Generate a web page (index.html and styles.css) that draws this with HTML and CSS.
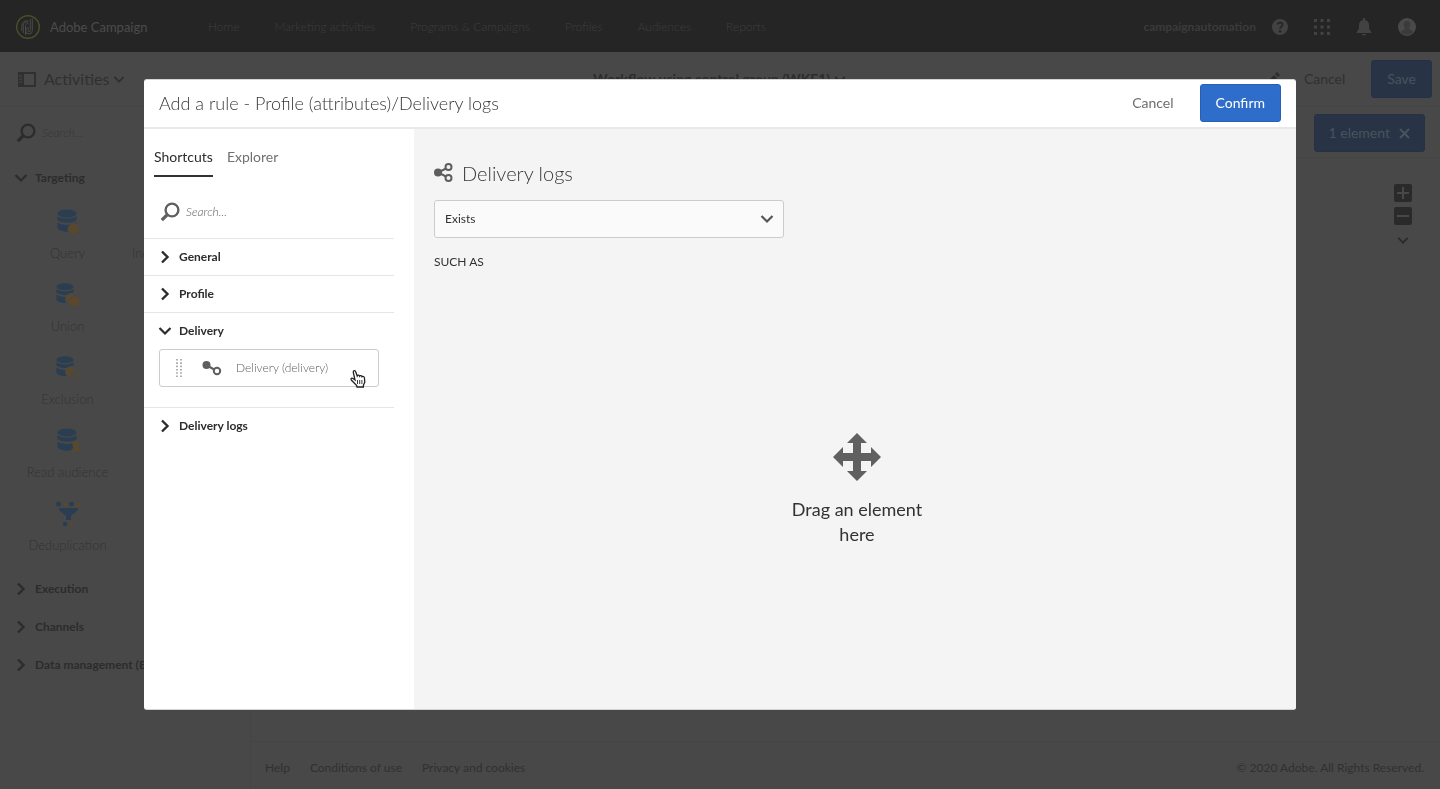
FILE: index.html
```html
<!DOCTYPE html>
<html lang="en">
<head>
<meta charset="utf-8">
<meta name="viewport" content="width=device-width, initial-scale=1">
<title>Adobe Campaign - Add a rule</title>
<link rel="stylesheet" href="styles.css">
</head>
<body>
<svg class="defs" aria-hidden="true">
  <symbol id="right" viewBox="0 0 10 14"><path d="M2 1.500 7.500 7 2 12.500" fill="none" stroke="currentColor" stroke-width="2.400"/></symbol>
  <symbol id="down" viewBox="0 0 14 10"><path d="M1.500 2 7 7.500 12.500 2" fill="none" stroke="currentColor" stroke-width="2.200"/></symbol>
  <symbol id="search" viewBox="0 0 20 20"><circle cx="12" cy="8" r="6.400" fill="none" stroke="currentColor" stroke-width="2.400"/><path d="M7.500 12.500 1.800 18.200" stroke="currentColor" stroke-width="3.200"/></symbol>
  <symbol id="db" viewBox="0 0 20 24"><ellipse cx="10" cy="4.500" rx="9.500" ry="4"/><path d="M.5 7c3 3.600 16 3.600 19 0v4c-3 3.600-16 3.600-19 0zM.5 13.200c3 3.600 16 3.600 19 0v6c-3 4.600-16 4.600-19 0z"/></symbol>
</svg>
<div class="app">
  <header class="topbar">
    <svg class="logo" viewBox="0 0 24 24" fill="none"><circle cx="12" cy="12" r="11.300" stroke="#4a4f2a" stroke-width="1.400"/><path d="M16.300 3.500v12.200a3.300 3.300 0 1 1-3.300-3.300M14.300 4v11.500a1.300 1.300 0 1 1-1.300-1.300M7.300 18V10.500a3.500 3.500 0 0 1 5-3.200M9.500 20v-9.500a2 2 0 0 1 3-1.500M5.800 16v-5a5 5 0 0 1 6.500-5" stroke="#494a45"/></svg>
    <span class="brand">Adobe Campaign</span>
    <nav class="nav" aria-label="Main">
      <a href="#">Home</a><a href="#">Marketing activities</a><a href="#">Programs &amp; Campaigns</a><a href="#">Profiles</a><a href="#">Audiences</a><a href="#">Reports</a>
    </nav>
    <span class="account">campaignautomation</span>
    <div class="tools">
      <button type="button" aria-label="Help"><svg width="16" height="16" viewBox="0 0 16 16"><circle cx="8" cy="8" r="8" fill="currentColor"/><path d="M5.500 5.500C6 3 10.500 3 10.500 5.800c0 1.800-2.400 1.800-2.400 4" fill="none" stroke="#252525" stroke-width="1.800"/><circle cx="8.100" cy="12.300" r="1.200" fill="#252525"/></svg></button>
      <button type="button" aria-label="Apps"><svg width="16" height="16" viewBox="0 0 16 16" fill="currentColor"><path d="M0 0h3v3H0zM6.500 0h3v3h-3zM13 0h3v3h-3zM0 6.500h3v3H0zM6.500 6.500h3v3h-3zM13 6.500h3v3h-3zM0 13h3v3H0zM6.500 13h3v3h-3zM13 13h3v3h-3z"/></svg></button>
      <button type="button" aria-label="Notifications"><svg width="16" height="18" viewBox="0 0 16 18" fill="currentColor"><path d="M7 0h2v2c3 .5 4 3 4 5 0 4 .5 5 2.500 7v1H.5v-1C2.500 12 3 11 3 7c0-2 1-4.500 4-5zM6 16h4c0 2-4 2-4 0z"/></svg></button>
      <button type="button" aria-label="User"><svg width="18" height="18" viewBox="0 0 18 18"><circle cx="9" cy="9" r="9" fill="#4a4a4a"/><path d="M9 3c3 0 4 2.500 3 5-.5 1.500-1 2-1 3 1.500 1 3.500 1 4 3.500-3 3-9 3-12 0 .5-2.500 2.500-2.500 4-3.500 0-1-.5-1.500-1-3C5 5.500 6 3 9 3z" fill="#3b3b3b"/></svg></button>
    </div>
  </header>
  <div class="subheader">
    <button type="button" class="activities"><svg width="18" height="15" viewBox="0 0 18 15"><path d="M0 0h18v15H0zM6 2v11h10V2z" fill="currentColor" fill-rule="evenodd"/><path d="M1 4h3M1 7h3M1 10h3" stroke="#484848"/></svg><span>Activities</span><svg width="12" height="9"><use href="#down"/></svg></button>
    <h1 class="workflow">Workflow using control group (WKF1) <svg width="12" height="9"><use href="#down"/></svg></h1>
    <button type="button" class="pencil" aria-label="Edit"><svg width="14" height="14" viewBox="0 0 14 14" fill="currentColor"><path d="M0 14l1-4 7-7 3 3-7 7zM9 2l2-2 3 3-2 2z"/></svg></button>
    <button type="button" class="plain dim-plain">Cancel</button>
    <button type="button" class="btn dim">Save</button>
  </div>
  <div class="workspace">
    <aside class="palette">
      <label class="search"><svg width="20" height="20"><use href="#search"/></svg><input type="search" placeholder="Search..." aria-label="Search activities"></label>
      <button type="button" class="section open"><svg width="14" height="10"><use href="#down"/></svg>Targeting</button>
      <div class="tiles">
        <div class="tile"><svg viewBox="0 0 24 26"><use href="#db" x="1" width="20" height="24"/><circle cx="17.500" cy="20" r="5.500" class="amber"/></svg>Query</div>
        <div class="tile label-only">Inc</div>
        <div class="tile"><svg viewBox="0 0 24 26"><use href="#db" width="18" height="23"/><circle cx="15" cy="17" r="5.500" class="amber"/><circle cx="18.500" cy="19.500" r="5.500" class="amber"/></svg>Union</div>
        <div class="tile"></div>
        <div class="tile"><svg viewBox="0 0 24 26"><use href="#db" width="18" height="23"/><circle cx="15" cy="17" r="5.500" class="amber"/><circle cx="18.500" cy="19.500" r="4.500" class="ring"/></svg>Exclusion</div>
        <div class="tile"></div>
        <div class="tile"><svg viewBox="0 0 24 26"><use href="#db" x="1" width="20" height="24"/><path class="amber" d="M20 13c3 0 4 2 3 5l-1 2c1 1 3 1 3 4h-10c0-3 2-3 3-4l-1-2c-1-3 0-5 3-5z"/></svg>Read audience</div>
        <div class="tile"></div>
        <div class="tile"><svg viewBox="0 0 24 26"><path d="M3 7h19v2l-7 6v4h-5v-4L3 9z"/><circle cx="2.500" cy="3" r="2.500"/><circle cx="15.500" cy="3" r="2.500"/><circle cx="9" cy="23" r="2.300"/><path class="flat" d="m9 1 2.500 4h-5zM22 1l2.500 4h-5zM15.500 21l2.500 4h-5z"/></svg>Deduplication</div>
        <div class="tile"></div>
      </div>
      <button type="button" class="section"><svg width="10" height="14"><use href="#right"/></svg>Execution</button>
      <button type="button" class="section"><svg width="10" height="14"><use href="#right"/></svg>Channels</button>
      <button type="button" class="section"><svg width="10" height="14"><use href="#right"/></svg>Data management (ETL)</button>
    </aside>
    <main class="canvas">
      <div class="selection"><button type="button" class="btn dim">1 element <svg width="11" height="11" viewBox="0 0 11 11"><path d="m1 1 9 9M10 1 1 10" stroke="currentColor" stroke-width="2"/></svg></button></div>
      <div class="zoom">
        <button type="button" aria-label="Zoom in"><svg width="18" height="18" viewBox="0 0 18 18"><rect width="18" height="18" rx="2" fill="currentColor"/><path d="M3 9h12M9 3v12" stroke="#484848" stroke-width="2"/></svg></button>
        <button type="button" aria-label="Zoom out"><svg width="18" height="18" viewBox="0 0 18 18"><rect width="18" height="18" rx="2" fill="currentColor"/><path d="M3 9h12" stroke="#484848" stroke-width="2"/></svg></button>
        <button type="button" aria-label="More"><svg width="12" height="9"><use href="#down"/></svg></button>
      </div>
      <footer class="footer"><a href="#">Help</a><a href="#">Conditions of use</a><a href="#">Privacy and cookies</a><span>© 2020 Adobe. All Rights Reserved.</span></footer>
    </main>
  </div>
</div>
<div class="overlay">
  <section class="dialog" role="dialog" aria-modal="true" aria-labelledby="dialog-title">
    <header class="dialog-head">
      <h2 id="dialog-title">Add a rule - Profile (attributes)/Delivery logs</h2>
      <button type="button" class="plain">Cancel</button>
      <button type="button" class="btn">Confirm</button>
    </header>
    <div class="dialog-body">
      <aside class="rules">
        <div class="tabs" role="tablist"><button type="button" role="tab" aria-selected="true">Shortcuts</button><button type="button" role="tab" aria-selected="false">Explorer</button></div>
        <label class="search"><svg width="20" height="20"><use href="#search"/></svg><input type="search" placeholder="Search..." aria-label="Search rules"></label>
        <div class="group"><button type="button" class="section"><svg width="10" height="14"><use href="#right"/></svg>General</button></div>
        <div class="group"><button type="button" class="section"><svg width="10" height="14"><use href="#right"/></svg>Profile</button></div>
        <div class="group expanded"><button type="button" class="section open"><svg width="14" height="10"><use href="#down"/></svg>Delivery</button>
          <div class="rule">
            <svg width="8" height="20" viewBox="0 0 8 20"><path d="M2 1v18M6 1v18" stroke="#a8a8a8" stroke-width="1.800" stroke-dasharray="1.600 1.700"/></svg>
            <svg width="20" height="16" viewBox="0 0 20 16"><path d="m4 5 11 6" stroke="#5e5e5e" stroke-width="2"/><circle cx="4.500" cy="5" r="4" fill="#5e5e5e"/><circle cx="15" cy="11" r="3.200" fill="#fff" stroke="#5e5e5e" stroke-width="2"/></svg>
            <span>Delivery (delivery)</span>
            <svg class="pointer" width="18" height="20" viewBox="0 0 18 20"><path d="M6 11 4.300 3.500C4 1.300 6.200 1 6.800 3l1.400 4c.5-1.200 2.100-1 2.400.2.700-1 2.200-.7 2.400.5.900-.7 2.300-.2 2.400 1l.4 4.500-1.400 3V18H8l-.5-1.700L2.300 11c-.9-1.400.6-2.500 1.700-1.500z" fill="#fff" stroke="#222" stroke-width="1.300"/><path d="M8.500 11v4M10.700 11v4M12.900 11v4" stroke="#222" stroke-width=".9"/></svg>
          </div>
        </div>
        <div class="group"><button type="button" class="section"><svg width="10" height="14"><use href="#right"/></svg>Delivery logs</button></div>
      </aside>
      <div class="editor">
        <h3><svg width="20" height="20" viewBox="0 0 20 20"><path d="M15 4 4 9.500l11 5.500" fill="none" stroke="#5e5e5e" stroke-width="2"/><circle cx="4" cy="9.500" r="4" fill="#5e5e5e"/><circle cx="14.500" cy="4" r="3" fill="#f4f4f4" stroke="#5e5e5e" stroke-width="2"/><circle cx="14.500" cy="15" r="3" fill="#f4f4f4" stroke="#5e5e5e" stroke-width="2"/></svg>Delivery logs</h3>
        <div class="select"><select aria-label="Condition"><option>Exists</option></select><svg width="14" height="10"><use href="#down"/></svg></div>
        <p class="such">SUCH AS</p>
        <div class="drop"><svg width="50" height="50" viewBox="0 0 50 50"><path d="m25 1 10 10h-6v10h10v-6l10 10-10 10v-6H29v10h6L25 49 15 39h6V29H11v6L1 25l10-10v6h10V11h-6z" fill="#606060"/></svg><p>Drag an element<br>here</p></div>
      </div>
    </div>
  </section>
</div>
</body>
</html>
```
FILE: styles.css
```css
* { box-sizing: border-box; }
body { margin: 0; font-family: Lato, "Open Sans", sans-serif; font-size: 13px; line-height: 20px; color: #323232; background: #484848; overflow: hidden; }
h1, h2, h3, p { margin: 0; }
button, input, select { font: inherit; color: inherit; background: none; border: 0; padding: 0; margin: 0; outline: 0; }
a { color: inherit; text-decoration: none; }
svg { flex: none; display: block; overflow: visible; }
.defs { position: absolute; width: 0; height: 0; }

.app { height: 100vh; display: flex; flex-direction: column; color: #2c2c2c; }
.topbar { height: 52px; flex: none; display: flex; align-items: center; padding: 1px 24px 0 16px; background: #252525; color: #3e3e3e; }
.logo { width: 24px; height: 24px; }
.brand { width: 158px; margin-left: 10px; font-size: 13px; color: #4c4c4c; }
.nav { display: flex; gap: 35px; font-size: 12px; font-weight: 300; white-space: nowrap; }
.account { margin-left: auto; font-size: 12px; font-weight: 700; color: #3b3b3b; }
.tools { display: flex; align-items: center; gap: 26px; margin-left: 16px; color: #424242; }
.tools button { display: flex; justify-content: center; }

.subheader { height: 55px; flex: none; display: flex; align-items: center; padding: 0 8px 0 18px; border-bottom: 1px solid #444; }
.activities { display: flex; align-items: center; gap: 8px; font-size: 16px; color: #303030; }
.activities svg:last-child { margin-left: -4px; }
.workflow { flex: 1; display: flex; gap: 4px; align-items: center; justify-content: center; margin-left: 48px; font-size: 14px; }
.pencil { margin-right: 24px; color: #2c2c2c; }
.plain { font-size: 14px; color: #6e6e6e; margin-right: 26px; }
.dim-plain { color: #303030; }
.btn { height: 38px; padding: 0 15px; border-radius: 3px; border: 1px solid #2460b8; background: #2f6dca; color: #fff; font-size: 14px; }
.btn.dim { background: #283446; border-color: #253245; color: #4a525c; }

.workspace { flex: 1; min-height: 0; display: flex; }
.palette { width: 251px; flex: none; border-right: 1px solid #454545; padding-top: 16px; }
.search { display: flex; align-items: center; gap: 6px; height: 20px; padding-left: 16px; }
.search input { width: 160px; height: 20px; font-size: 12px; font-style: italic; font-weight: 300; }
.search input::placeholder { color: inherit; opacity: 1; }
.palette .search input { color: #363636; }
.section { display: flex; align-items: center; width: 100%; height: 38px; padding-left: 16px; gap: 9px; font-size: 12px; font-weight: 700; text-align: left; white-space: nowrap; }
.section.open { padding-left: 14px; gap: 7px; }
.palette .section.open { margin-top: 16px; }
.tiles { display: grid; grid-template-columns: 115px 115px; grid-template-rows: repeat(4, 73px) 69px; padding: 12px 0 0 10px; }
.tile { display: flex; flex-direction: column; align-items: center; gap: 8px; font-weight: 300; color: #333; white-space: nowrap; }
.label-only { align-items: flex-start; padding: 34px 0 0 7px; }
.tile svg { width: 24px; height: 26px; fill: #2b3d51; }
.tile .amber { fill: #5a482d; stroke: #484848; stroke-width: 1; }
.tile .flat { fill: #5a482d; }
.tile .ring { fill: #484848; stroke: #5a482d; stroke-width: 1; }
.canvas { flex: 1; display: flex; flex-direction: column; min-width: 0; }
.selection { height: 51px; padding: 7px 15px; border-bottom: 1px solid #444; text-align: right; }
.selection .btn { display: inline-flex; align-items: center; gap: 9px; padding: 0 14px; }
.zoom { flex: 1; display: flex; flex-direction: column; align-items: flex-end; gap: 5px; padding: 26px 28px 0 0; color: #2a2a2a; }
.zoom button:last-child { margin: 6px 3px 0 0; }
.footer { display: flex; gap: 20px; height: 48px; padding: 16px 16px 0 14px; border-top: 1px solid #454545; font-size: 12px; color: #303030; }
.footer span { margin-left: auto; }

.overlay { position: fixed; inset: 0; display: grid; place-items: center; }
.dialog { width: 80%; height: 80%; display: flex; flex-direction: column; background: #fff; border-radius: 3px; border: solid #d4d4d4; border-width: 1px 0; overflow: hidden; }
.dialog-head { height: 49px; flex: none; display: flex; align-items: center; padding: 0 15px; border-bottom: 2px solid #e8e8e8; }
.dialog-head h2 { flex: 1; font-size: 18px; font-weight: 300; color: #383838; }
.dialog-body { flex: 1; min-height: 0; display: flex; }
.rules { width: 270px; flex: none; padding-right: 20px; color: #2c2c2c; }
.tabs { display: flex; gap: 14px; padding: 18px 10px 0; font-size: 14px; }
.tabs button { height: 30px; padding-bottom: 10px; color: #707070; }
.tabs button[aria-selected="true"] { border-bottom: 2px solid #323232; color: #2c2c2c; }
.rules .search { margin: 25px 0 16px; color: #606060; }
.group { border-top: 1px solid #e6e6e6; }
.group .section { height: 36px; }
.expanded { padding-bottom: 20px; }
.rule { position: relative; display: flex; align-items: center; height: 38px; margin: 0 15px; padding-left: 15px; border: 1px solid #ccc; border-radius: 3px; font-size: 12px; font-weight: 300; color: #5c5c5c; }
.rule svg:nth-child(2) { margin: 0 14px 0 19px; }
.rule .pointer { position: absolute; right: 11px; bottom: -3px; }
.editor { flex: 1; min-width: 0; display: flex; flex-direction: column; padding: 31px 20px 0; background: #f4f4f4; }
.editor h3 { display: flex; align-items: center; gap: 8px; height: 26px; font-size: 20px; font-weight: 300; color: #383838; }
.select { position: relative; width: 350px; margin-top: 14px; }
.select select { appearance: none; width: 100%; height: 38px; padding: 0 10px; border: 1px solid #ccc; border-radius: 3px; background: #fafafa; font-size: 12px; }
.select svg { position: absolute; right: 10px; top: 14px; color: #555; pointer-events: none; }
.such { margin-top: 14px; font-size: 12px; }
.drop { flex: 1; display: flex; flex-direction: column; align-items: center; justify-content: center; gap: 15px; padding: 0 0 2px 4px; font-size: 18px; line-height: 25px; text-align: center; }
```
